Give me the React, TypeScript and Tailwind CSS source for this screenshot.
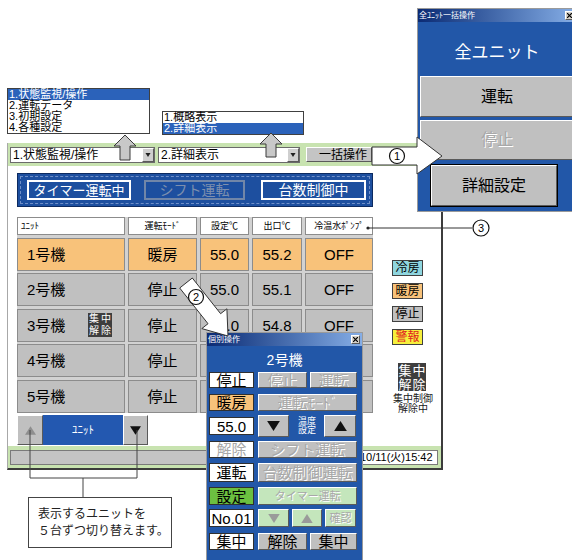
import React from 'react'

// 状態監視画面の説明図（メイン画面＋ポップアップ＋吹き出し）

const bevel = 'border border-t-white border-l-white border-r-[#5a5a5a] border-b-[#5a5a5a]'
const dis = 'text-[#a8a8a8] [text-shadow:1px_1px_0_#ffffff]'
const blue = 'bg-[#2257a8]'

function Tri({ up, fill, w = 14, h = 11 }: { up?: boolean; fill: string; w?: number; h?: number }) {
  return (
    <svg width={w} height={h} viewBox="0 0 14 11">
      <polygon points={up ? '7,0 14,11 0,11' : '0,0 14,0 7,11'} fill={fill} />
    </svg>
  )
}

function CloseBox() {
  return (
    <div className={`w-[9px] h-[9px] bg-[#d4d0c8] ${bevel} flex items-center justify-center`}>
      <svg width="5" height="5" viewBox="0 0 5 5">
        <path d="M0 0L5 5M5 0L0 5" stroke="#000" strokeWidth="1.2" />
      </svg>
    </div>
  )
}

function TitleBar({ title }: { title: string }) {
  return (
    <div className="h-[13px] flex items-center justify-between pl-[1px] pr-[2px] bg-linear-to-r from-[#0b2a74] to-[#86aee6]">
      <span className="text-[8px] leading-none text-white whitespace-nowrap">{title}</span>
      <CloseBox />
    </div>
  )
}

function Dropdown({ text, className }: { text: string; className: string }) {
  return (
    <div className={`h-[16px] bg-white border border-[#6a6a6a] flex items-center justify-between ${className}`}>
      <span className="pl-[2px] text-[12px] leading-none text-black whitespace-nowrap">{text}</span>
      <div className={`w-[12px] h-[14px] bg-[#cfcfcf] ${bevel} flex items-center justify-center`}>
        <Tri fill="#202020" w={6} h={4} />
      </div>
    </div>
  )
}

function LockIcon({ big }: { big?: boolean }) {
  return (
    <div
      className={`grid grid-cols-2 bg-[#3e3e3e] text-white leading-none place-items-center ${
        big ? 'w-[28px] h-[28px] text-[13px]' : 'w-[24px] h-[24px] text-[10px]'
      }`}
    >
      <span>集</span>
      <span>中</span>
      <span>解</span>
      <span>除</span>
    </div>
  )
}

type Row = { name: string; mode: string; set: string; out: string; pump: string; warm?: boolean; lock?: boolean }

// 4・5号機の右側は個別操作ウィンドウの下に隠れる
const rows: Row[] = [
  { name: '1号機', mode: '暖房', set: '55.0', out: '55.2', pump: 'OFF', warm: true },
  { name: '2号機', mode: '停止', set: '55.0', out: '55.1', pump: 'OFF' },
  { name: '3号機', mode: '停止', set: '55.0', out: '54.8', pump: 'OFF', lock: true },
  { name: '4号機', mode: '停止', set: '', out: '', pump: '' },
  { name: '5号機', mode: '停止', set: '', out: '', pump: '' },
]

const head = ['ﾕﾆｯﾄ', '運転ﾓｰﾄﾞ', '設定℃', '出口℃', '冷温水ﾎﾟﾝﾌﾟ']

function UnitTable() {
  return (
    <div className="mt-[10px] grid grid-cols-[108px_69px_49px_50px_68px] grid-rows-[18px_repeat(5,33px)] gap-x-[3px] gap-y-[2.5px] bg-[#d2d2d2]">
      {head.map((h, i) => (
        <div
          key={h}
          className={`bg-white border border-[#8c8c8c] flex items-center text-[9px] leading-none text-black whitespace-nowrap ${
            i === 0 ? 'pl-[3px]' : 'justify-center'
          }`}
        >
          {h}
        </div>
      ))}
      {rows.map((r) => {
        const bg = r.warm ? 'bg-[#f8c27a]' : 'bg-[#c0c0c0]'
        const cell = `${bg} border border-[#8c8c8c] flex items-center justify-center text-[15px] leading-none text-black`
        return (
          <React.Fragment key={r.name}>
            <div className={`${bg} border border-[#8c8c8c] flex items-center pl-[9px] pr-[12px] text-[15px] leading-none text-black`}>
              <span>{r.name}</span>
              {r.lock && (
                <span className="ml-auto">
                  <LockIcon />
                </span>
              )}
            </div>
            <div className={cell}>{r.mode}</div>
            <div className={cell}>{r.set}</div>
            <div className={cell}>{r.out}</div>
            <div className={cell}>{r.pump}</div>
          </React.Fragment>
        )
      })}
    </div>
  )
}

function Banner() {
  const btn = 'h-[20px] border-2 flex items-center justify-center leading-none whitespace-nowrap'
  return (
    <div className="h-[34px] bg-[#1d4f9f] border border-[#0c2a60] p-[2px]">
      <div className="h-full border border-dashed border-[#6f8fc8] flex items-center">
        <div className={`${btn} ml-[6px] w-[104px] border-white text-white text-[13px]`}>タイマー運転中</div>
        <div className={`${btn} ml-[13px] w-[101px] border-[#7186a8] text-[#7d8fae] text-[14px]`}>シフト運転</div>
        <div className={`${btn} ml-[16px] w-[105px] border-white text-white text-[14px]`}>台数制御中</div>
      </div>
    </div>
  )
}

function Legend() {
  const box = 'w-[31px] h-[16px] border border-[#404040] flex items-center justify-center text-[12px] leading-none'
  return (
    <div className="ml-[19px] mt-[87px] w-[44px] flex flex-col">
      <div className={`${box} bg-[#8fd6df] text-black`}>冷房</div>
      <div className={`${box} mt-[7px] bg-[#f8c27a] text-black`}>暖房</div>
      <div className={`${box} mt-[7px] bg-[#c0c0c0] text-black`}>停止</div>
      <div className={`${box} mt-[7px] bg-[#f6ef3c] text-[#e02020]`}>警報</div>
      <div className="mt-[18px] ml-[6px]">
        <LockIcon big />
      </div>
      <div className="mt-[3px] w-[42px] text-center text-[10px] leading-[10px] text-[#202020]">
        集中制御
        <br />
        解除中
      </div>
    </div>
  )
}

function MainWindow() {
  return (
    <div className="absolute left-[7px] top-[143px] w-[436px] h-[327px] flex flex-col bg-[#c8e3b0] border-l border-l-[#a8a8a8] border-r-2 border-r-[#3c3c3c] border-b-2 border-b-[#3c3c3c]">
      <div className="h-[23px] flex items-center pl-[2px]">
        <Dropdown text="1.状態監視/操作" className="w-[145px]" />
        <Dropdown text="2.詳細表示" className="ml-[3px] w-[142px]" />
        <div className={`ml-[6px] w-[66px] h-[15px] bg-[#c4c4c4] ${bevel} flex items-center justify-center pl-[8px] text-[12px] leading-none text-black whitespace-nowrap`}>
          一括操作
        </div>
      </div>
      <div className="flex-1 bg-white flex pl-[9px] pt-[7px]">
        <div className="w-[356px] flex flex-col">
          <Banner />
          <UnitTable />
          <div className="mt-[2.5px] h-[30px] flex">
            <div className={`w-[26px] bg-[#c0c0c0] ${bevel} flex items-center justify-center`}>
              <Tri up fill="#8e8e8e" w={11} h={9} />
            </div>
            <div className="w-[80px] bg-[#2358b0] flex items-center justify-center text-white text-[11px] leading-none">
              ﾕﾆｯﾄ
            </div>
            <div className={`w-[25px] bg-[#c0c0c0] ${bevel} flex items-center justify-center`}>
              <Tri fill="#111111" w={11} h={9} />
            </div>
          </div>
        </div>
        <Legend />
      </div>
      <div className="h-[22px] flex items-center pl-[2px] pr-[3px]">
        <div className="flex-1 h-[15px] bg-[#c4c4c4] border border-[#7a7a7a]" />
        <div className="w-[82px] h-[15px] bg-white border border-[#7a7a7a] flex items-center pl-[3px] text-[11px] leading-none text-black whitespace-nowrap">
          10/11(火)15:42
        </div>
      </div>
    </div>
  )
}

function Lists() {
  const item = 'h-[11px] flex items-center px-[1px] text-[11px] leading-none whitespace-nowrap'
  const sel = 'bg-[#2b62ba] text-white'
  return (
    <>
      <div className="absolute left-[7px] top-[88px] w-[143px] bg-white border border-[#404040]">
        <div className={`${item} ${sel}`}>1.状態監視/操作</div>
        <div className={item}>2.運転データ</div>
        <div className={item}>3.初期設定</div>
        <div className={item}>4.各種設定</div>
      </div>
      <div className="absolute left-[162px] top-[111px] w-[142px] bg-white border border-[#404040]">
        <div className={item}>1.概略表示</div>
        <div className={`${item} ${sel}`}>2.詳細表示</div>
      </div>
    </>
  )
}

function AllUnitsPopup() {
  return (
    <div className={`absolute left-[417px] top-[8px] w-[160px] h-[204px] ${blue} border border-[#9a9a9a] flex flex-col`}>
      <TitleBar title="全ﾕﾆｯﾄ一括操作" />
      <div className="h-[54px] flex items-center justify-center pt-[6px] text-white text-[17px] leading-none">全ユニット</div>
      <div className={`mx-[2px] h-[41px] bg-[#c0c0c0] ${bevel} flex items-center justify-center text-[16px] leading-none text-black`}>
        運転
      </div>
      <div className={`mt-[3px] mx-[2px] h-[40px] bg-[#c0c0c0] ${bevel} flex items-center justify-center text-[16px] leading-none ${dis}`}>
        停止
      </div>
      <div className="mt-[4px] ml-[12px] w-[128px] h-[43px] border border-black">
        <div className={`h-full bg-[#c0c0c0] ${bevel} flex items-center justify-center text-[16px] leading-none text-black`}>
          詳細設定
        </div>
      </div>
    </div>
  )
}

function UnitPopup() {
  const lb = 'w-[45px] border border-[#303030] flex items-center justify-center text-[15px] leading-none whitespace-nowrap'
  const gb = `bg-[#c0c0c0] ${bevel} flex items-center justify-center leading-none whitespace-nowrap overflow-hidden`
  const lg = `bg-[#c4e6bc] ${bevel} flex items-center justify-center leading-none whitespace-nowrap`
  return (
    <div className={`absolute left-[206px] top-[332px] w-[157px] h-[240px] ${blue} border border-[#9a9a9a] flex flex-col`}>
      <TitleBar title="個別操作" />
      <div className="h-[26px] flex items-center justify-center pt-[1px] text-white text-[14px] leading-none">2号機</div>
      <div className="pl-[2px] flex flex-col">
        <div className="h-[16px] flex gap-[4px]">
          <div className={`${lb} bg-white text-black`}>停止</div>
          <div className="flex gap-[3px]">
            <div className={`${gb} w-[49px] text-[15px] ${dis}`}>停止</div>
            <div className={`${gb} w-[47px] text-[15px] ${dis}`}>運転</div>
          </div>
        </div>
        <div className="mt-[6px] h-[17px] flex gap-[4px]">
          <div className={`${lb} bg-[#f8c27a] text-black`}>暖房</div>
          <div className={`${gb} w-[99px] text-[15px] ${dis}`}>運転ﾓｰﾄﾞ</div>
        </div>
        <div className="mt-[4px] h-[22px] flex gap-[4px]">
          <div className={`${lb} h-[18px] self-center bg-white text-black`}>55.0</div>
          <div className="flex">
            <div className={`${gb} w-[31px]`}>
              <Tri fill="#111111" w={13} h={10} />
            </div>
            <div className="ml-[3px] w-[30px] flex items-center justify-center text-center text-white text-[9px] leading-[9px]">
              温度
              <br />
              設定
            </div>
            <div className={`${gb} ml-[2px] w-[32px]`}>
              <Tri up fill="#111111" w={13} h={10} />
            </div>
          </div>
        </div>
        <div className="mt-[4px] h-[17px] flex gap-[4px]">
          <div className={`${lb} bg-white text-[#a8a8a8]`}>解除</div>
          <div className={`${gb} w-[99px] text-[15px] ${dis}`}>シフト運転</div>
        </div>
        <div className="mt-[5px] h-[19px] flex gap-[4px]">
          <div className={`${lb} bg-white text-black`}>運転</div>
          <div className={`${gb} w-[99px] text-[15px] ${dis}`}>台数制御運転</div>
        </div>
        <div className="mt-[5px] h-[18px] flex gap-[4px]">
          <div className={`${lb} bg-[#6cc040] text-black`}>設定</div>
          <div className={`${lg} w-[99px] text-[11px] ${dis}`}>タイマー運転</div>
        </div>
        <div className="mt-[4px] h-[18px] flex gap-[4px]">
          <div className={`${lb} bg-white text-black`}>No.01</div>
          <div className="flex gap-[3px]">
            <div className={`${lg} w-[31px]`}>
              <Tri fill="#9a9a9a" w={12} h={9} />
            </div>
            <div className={`${lg} w-[30px]`}>
              <Tri up fill="#9a9a9a" w={12} h={9} />
            </div>
            <div className={`${lg} w-[31px] text-[11px] ${dis}`}>確認</div>
          </div>
        </div>
        <div className="mt-[6px] h-[17px] flex gap-[4px]">
          <div className={`${lb} bg-white text-black`}>集中</div>
          <div className="flex gap-[3px]">
            <div className={`${gb} w-[49px] text-[15px] text-black`}>解除</div>
            <div className={`${gb} w-[47px] text-[15px] text-black`}>集中</div>
          </div>
        </div>
      </div>
    </div>
  )
}

function upArrow(cx: number, tip: number, bottom: number) {
  const base = tip + 11
  return `${cx},${tip} ${cx + 11},${base} ${cx + 5},${base} ${cx + 5},${bottom} ${cx - 5},${bottom} ${cx - 5},${base} ${cx - 11},${base}`
}

function Callouts() {
  const num = { fontSize: 11, fontFamily: 'Liberation Sans, sans-serif', textAnchor: 'middle' as const }
  return (
    <svg className="absolute left-0 top-0 pointer-events-none" width="572" height="560" viewBox="0 0 572 560">
      <polygon points={upArrow(125, 135, 160)} fill="#c8c8c8" stroke="#3a3a3a" strokeWidth="1" />
      <polygon points={upArrow(271, 133, 157)} fill="#c8c8c8" stroke="#3a3a3a" strokeWidth="1" />

      {/* ① */}
      <polygon points="372,147 417,147 417,137 442,156 417,174 417,165 372,165" fill="#fff" stroke="#333" strokeWidth="1" />
      <circle cx="397" cy="156" r="7.5" fill="#fff" stroke="#111" strokeWidth="1.2" />
      <text x="397" y="160" {...num}>1</text>

      {/* ② */}
      <polygon
        points="192.3,278 220.6,313.7 226.9,308.8 228,336 201.8,328.6 208,323.7 179.7,288"
        fill="#fff"
        stroke="#333"
        strokeWidth="1"
      />
      <circle cx="196" cy="297" r="7.5" fill="#fff" stroke="#111" strokeWidth="1.2" />
      <text x="196" y="301" {...num}>2</text>

      {/* ③ */}
      <circle cx="368" cy="228" r="1.6" fill="#222" />
      <line x1="368" y1="228" x2="472" y2="228" stroke="#333" strokeWidth="1" />
      <circle cx="481" cy="228" r="8" fill="#fff" stroke="#111" strokeWidth="1.2" />
      <text x="481" y="232" {...num}>3</text>

      {/* ユニット切替の説明線 */}
      <polyline points="30,430 30,478 137,478 137,430" fill="none" stroke="#444" strokeWidth="1" />
      <line x1="83" y1="478" x2="83" y2="497" stroke="#444" strokeWidth="1" />
    </svg>
  )
}

export default function App() {
  return (
    <div className="relative w-[572px] h-[560px] overflow-hidden bg-white font-['Liberation_Sans','Noto_Sans_CJK_JP',sans-serif]">
      <Lists />
      <MainWindow />
      <AllUnitsPopup />
      <UnitPopup />
      <div className="absolute left-[28px] top-[497px] w-[144px] h-[51px] border border-[#444] bg-white flex flex-col justify-center pl-[9px] text-[12px] leading-[17px] text-[#222]">
        <span>表示するユニットを</span>
        <span>５台ずつ切り替えます。</span>
      </div>
      <Callouts />
    </div>
  )
}
